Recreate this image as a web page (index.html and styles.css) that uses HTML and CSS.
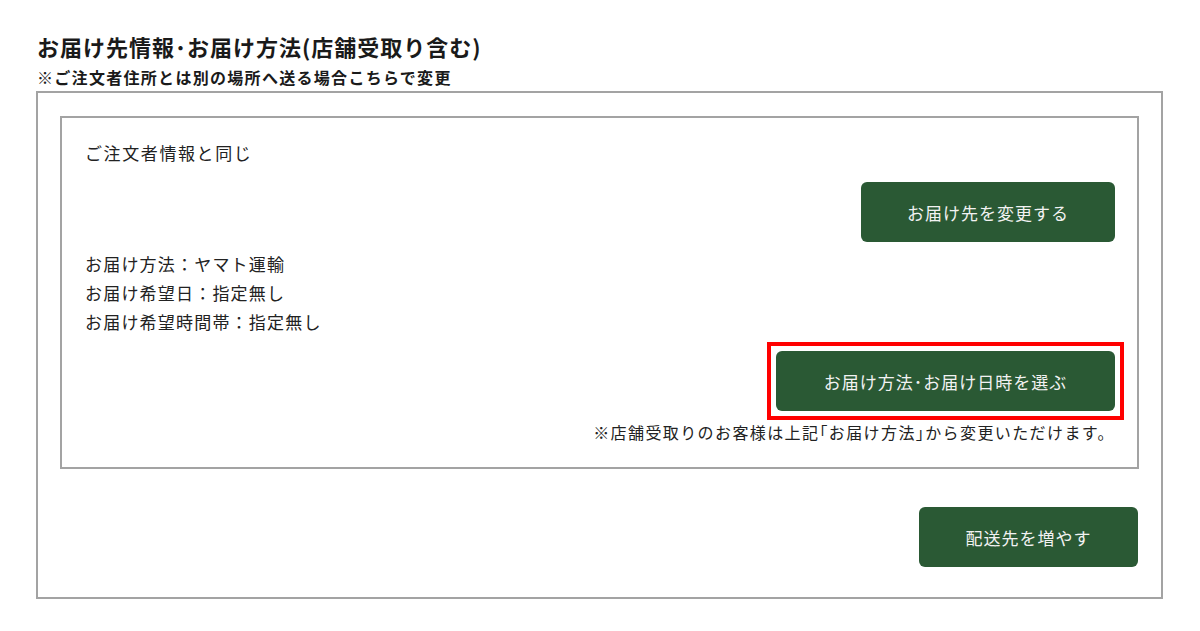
FILE: index.html
```html
<!DOCTYPE html>
<html lang="ja">
<head>
  <meta charset="UTF-8" />
  <meta name="viewport" content="width=device-width, initial-scale=1.0"/>
  <title>お届け先情報</title>
  <link rel="stylesheet" href="styles.css">
</head>
<body>

  <section class="delivery">
    <h2>お届け先情報･お届け方法(店舗受取り含む)</h2>
    <p class="lead">※ご注文者住所とは別の場所へ送る場合こちらで変更</p>

    <div class="outer">
      <div class="inner">
        <p class="same">ご注文者情報と同じ</p>

        <div class="actions">
          <button class="btn btn-address">お届け先を変更する</button>
        </div>

        <ul class="info">
          <li>お届け方法：ヤマト運輸</li>
          <li>お届け希望日：指定無し</li>
          <li>お届け希望時間帯：指定無し</li>
        </ul>

        <div class="actions">
          <div class="highlight">
            <button class="btn btn-method">お届け方法･お届け日時を選ぶ</button>
          </div>
        </div>

        <p class="notice">※店舗受取りのお客様は上記｢お届け方法｣から変更いただけます。</p>
      </div>

      <div class="actions">
        <button class="btn btn-add">配送先を増やす</button>
      </div>
    </div>
  </section>

</body>
</html>
```

FILE: styles.css
```css
body {
  font-family: "Noto Sans CJK JP", "Noto Sans", sans-serif;
  margin: 0;
  padding: 0;
  background: #fff;
  color: #222;
}

.delivery {
  padding: 31px 37px 0 36px;
}

h2 {
  margin: 0 0 0 1px;
  font-size: 22px;
  line-height: 30px;
  font-weight: bold;
  letter-spacing: 1px;
  color: #1a1a1a;
}

.lead {
  margin: 5px 0 3px 1px;
  font-size: 16px;
  line-height: 22px;
  font-weight: bold;
  letter-spacing: 1.3px;
  color: #1a1a1a;
}

.outer {
  border: 2px solid #a3a3a3;
  padding: 23px 23px 30px 22px;
}

.inner {
  border: 2px solid #a3a3a3;
  padding: 20px 22px 24px 23px;
  margin-right: -1px;
}

.same {
  margin: 0;
  font-size: 17px;
  line-height: 29px;
  letter-spacing: 1.6px;
}

.actions {
  display: flex;
  justify-content: flex-end;
}

.btn {
  height: 60px;
  border: none;
  border-radius: 6px;
  background: #2a5934;
  color: #f2f2f2;
  font-family: inherit;
  font-size: 17px;
  letter-spacing: 1px;
  cursor: pointer;
}

.btn-address {
  width: 254px;
  margin-top: 15px;
}

.info {
  list-style: none;
  margin: 7px 0 0;
  padding: 0;
  font-size: 17px;
  line-height: 29px;
  letter-spacing: 1.2px;
}

.highlight {
  position: relative;
  margin-top: 15px;
  display: flex;
}

.highlight::after {
  content: "";
  position: absolute;
  top: -9px;
  left: -9px;
  right: -9px;
  bottom: -9px;
  border: 4px solid #f00;
}

.btn-method {
  width: 339px;
}

.notice {
  margin: 10px 0 0;
  font-size: 16px;
  line-height: 22px;
  letter-spacing: 1.4px;
  text-align: right;
}

.btn-add {
  width: 219px;
  margin-top: 38px;
}
```
